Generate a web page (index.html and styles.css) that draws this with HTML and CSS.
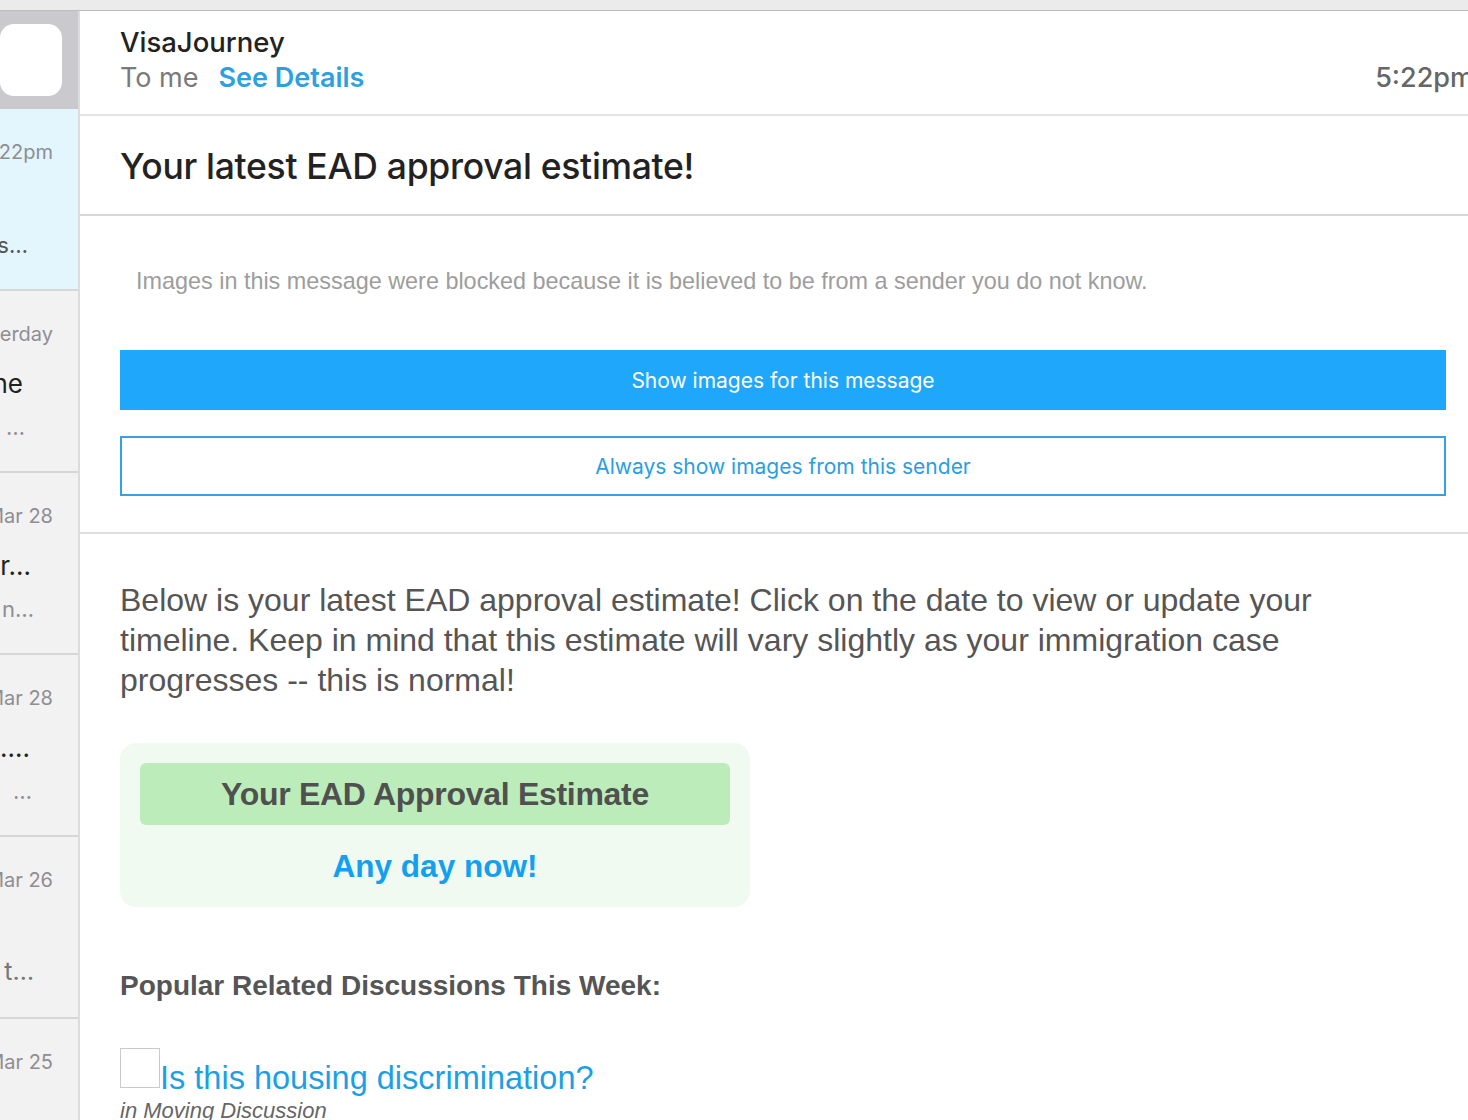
FILE: index.html
```html
<!DOCTYPE html>
<html lang="en">
<head>
<meta charset="utf-8">
<title>VisaJourney - Your latest EAD approval estimate!</title>
<link rel="stylesheet" href="styles.css">
</head>
<body>
<div class="topbar"></div>
<div class="app">
  <aside class="sidebar">
    <div class="search-area"><div class="search-box"></div></div>
    <div class="mail-row selected">
      <div class="line date">5:22pm</div>
      <div class="line subj"></div>
      <div class="line prev p-s">Your latest EAD approval estimates…</div>
    </div>
    <div class="mail-row">
      <div class="line date">Yesterday</div>
      <div class="line subj p-ne">Someone</div>
      <div class="line prev p-dots1">…</div>
    </div>
    <div class="mail-row">
      <div class="line date">Mar 28</div>
      <div class="line subj p-r">Your timer…</div>
      <div class="line prev p-n">Your latest n…</div>
    </div>
    <div class="mail-row">
      <div class="line date">Mar 28</div>
      <div class="line subj p-dots2">….</div>
      <div class="line prev p-dots3">…</div>
    </div>
    <div class="mail-row">
      <div class="line date">Mar 26</div>
      <div class="line subj"></div>
      <div class="line prev p-t">Update about t…</div>
    </div>
    <div class="mail-row">
      <div class="line date">Mar 25</div>
    </div>
  </aside>
  <main class="content">
    <header class="msg-header">
      <div class="sender-block">
        <div class="sender">VisaJourney</div>
        <div class="recips"><span class="tome">To me</span><span class="details">See Details</span></div>
      </div>
      <div class="time">5:22pm</div>
    </header>
    <section class="subject-bar">
      <h1 class="subject">Your latest EAD approval estimate!</h1>
    </section>
    <section class="blocked">
      <p class="blocked-note">Images in this message were blocked because it is believed to be from a sender you do not know.</p>
      <div class="btn btn-solid">Show images for this message</div>
      <div class="btn btn-outline">Always show images from this sender</div>
    </section>
    <section class="email-body">
      <p class="intro">Below is your latest EAD approval estimate! Click on the date to view or update your timeline. Keep in mind that this estimate will vary slightly as your immigration case progresses -- this is normal!</p>
      <div class="estimate-card">
        <div class="estimate-title">Your EAD Approval Estimate</div>
        <div class="estimate-value">Any day now!</div>
      </div>
      <h2 class="related-title">Popular Related Discussions This Week:</h2>
      <div class="topic">
        <div class="topic-line"><span class="img-ph"></span><span class="topic-link">Is this housing discrimination?</span></div>
        <div class="topic-forum">in Moving Discussion</div>
      </div>
    </section>
  </main>
</div>
</body>
</html>
```

FILE: styles.css
```css
* { box-sizing: border-box; }
html, body { margin: 0; padding: 0; }
body {
  width: 1468px;
  height: 1120px;
  overflow: hidden;
  background: #ffffff;
  font-family: "Liberation Sans", Arial, sans-serif;
}
.topbar {
  height: 11px;
  background: #ebebeb;
  border-bottom: 1px solid #bdbdbd;
}
.app {
  display: flex;
  height: 1109px;
}
.sidebar {
  width: 80px;
  flex: none;
  background: #f2f2f2;
  border-right: 2px solid #dcdcdc;
  overflow: hidden;
  font-family: Inter, "Liberation Sans", sans-serif;
}
.search-area {
  height: 98px;
  background: #c9c9ce;
  padding: 13px 16px 13px 0;
  display: flex;
  justify-content: flex-end;
}
.search-box {
  width: 120px;
  height: 72px;
  background: #ffffff;
  border-radius: 14px;
}
.mail-row {
  height: 182px;
  border-bottom: 2px solid #d6d6d6;
  padding-top: 29px;
  display: flex;
  flex-direction: column;
}
.mail-row.selected { background: #e3f6fd; }
.line {
  display: flex;
  justify-content: flex-end;
  white-space: nowrap;
  overflow: hidden;
}
.date {
  height: 28px;
  font-size: 20px;
  line-height: 28px;
  color: #8e8e93;
  padding-right: 25px;
}
.subj {
  height: 50px;
  margin-top: 11px;
  font-size: 26px;
  line-height: 50px;
  color: #222;
}
.prev {
  height: 44px;
  margin-top: -4px;
  font-size: 22px;
  line-height: 44px;
  color: #8e8e93;
}
.p-s { color: #555; padding-right: 50px; }
.p-ne { padding-right: 55px; }
.p-dots1 { padding-right: 53px; }
.p-r { padding-right: 47px; }
.p-n { padding-right: 44px; }
.p-dots2 { padding-right: 48px; color: #222; }
.p-dots3 { padding-right: 46px; }
.p-t { padding-right: 44px; color: #777; font-size: 25px; margin-top: -6px; }

.content {
  flex: 1;
  min-width: 0;
  display: flex;
  flex-direction: column;
}
.msg-header {
  height: 105px;
  flex: none;
  display: flex;
  justify-content: space-between;
  align-items: flex-end;
  padding: 12px 0 18px 40px;
  border-bottom: 2px solid #e4e4e4;
  font-family: Inter, "Liberation Sans", sans-serif;
}
.sender {
  font-size: 27.5px;
  line-height: 36px;
  color: #222;
  font-weight: 500;
}
.recips {
  font-size: 27px;
  line-height: 36px;
  display: flex;
  gap: 20px;
}
.tome { color: #7a7a7a; }
.details { color: #2d9fe3; font-weight: 600; }
.time {
  font-size: 27px;
  line-height: 36px;
  color: #666;
  font-weight: 500;
  margin-right: -6px;
}
.subject-bar {
  height: 100px;
  flex: none;
  display: flex;
  align-items: center;
  padding-left: 40px;
  padding-top: 2px;
  border-bottom: 2px solid #d8d8d8;
}
.subject {
  margin: 0;
  font-family: Inter, "Liberation Sans", sans-serif;
  font-size: 35.5px;
  font-weight: 500;
  color: #222;
  letter-spacing: -0.3px;
}
.blocked {
  padding: 0 22px 0 40px;
  border-bottom: 2px solid #dedede;
  height: 318px;
  flex: none;
}
.blocked-note {
  margin: 52px 0 0 16px;
  font-size: 23.4px;
  line-height: 26px;
  color: #9d9d9d;
  height: 82px;
}
.btn {
  height: 60px;
  display: flex;
  align-items: center;
  justify-content: center;
  font-family: Inter, "Liberation Sans", sans-serif;
  font-size: 21px;
}
.btn-solid {
  background: #1fa8fb;
  color: #ffffff;
}
.btn-outline {
  margin-top: 26px;
  border: 2px solid #36a2e6;
  color: #2a9ee3;
}
.email-body {
  padding: 46px 40px 0 40px;
}
.intro {
  margin: 0;
  width: 1220px;
  font-size: 32px;
  line-height: 40px;
  color: #555;
}
.estimate-card {
  margin-top: 43px;
  width: 630px;
  height: 164px;
  background: #f0faf0;
  border-radius: 16px;
  padding: 20px 20px 0 20px;
  display: flex;
  flex-direction: column;
  align-items: stretch;
}
.estimate-title {
  height: 62px;
  flex: none;
  background: #bdecbb;
  border-radius: 6px;
  display: flex;
  align-items: center;
  justify-content: center;
  font-size: 32px;
  font-weight: bold;
  color: #505050;
  letter-spacing: -0.3px;
}
.estimate-value {
  height: 82px;
  flex: none;
  display: flex;
  align-items: center;
  justify-content: center;
  font-size: 31.5px;
  font-weight: bold;
  color: #14a0ef;
}
.related-title {
  margin: 62px 0 0 0;
  font-size: 28px;
  line-height: 34px;
  font-weight: bold;
  color: #555;
}
.topic { margin-top: 45px; }
.topic-line {
  display: flex;
  align-items: flex-end;
}
.img-ph {
  width: 40px;
  height: 40px;
  border: 1px solid #c9c9c9;
  flex: none;
  align-self: flex-start;
}
.topic-link {
  font-size: 32.5px;
  line-height: 40px;
  color: #1d9fe6;
  margin-top: 10px;
}
.topic-forum {
  font-size: 22px;
  line-height: 26px;
  font-style: italic;
  color: #666;
}
```
